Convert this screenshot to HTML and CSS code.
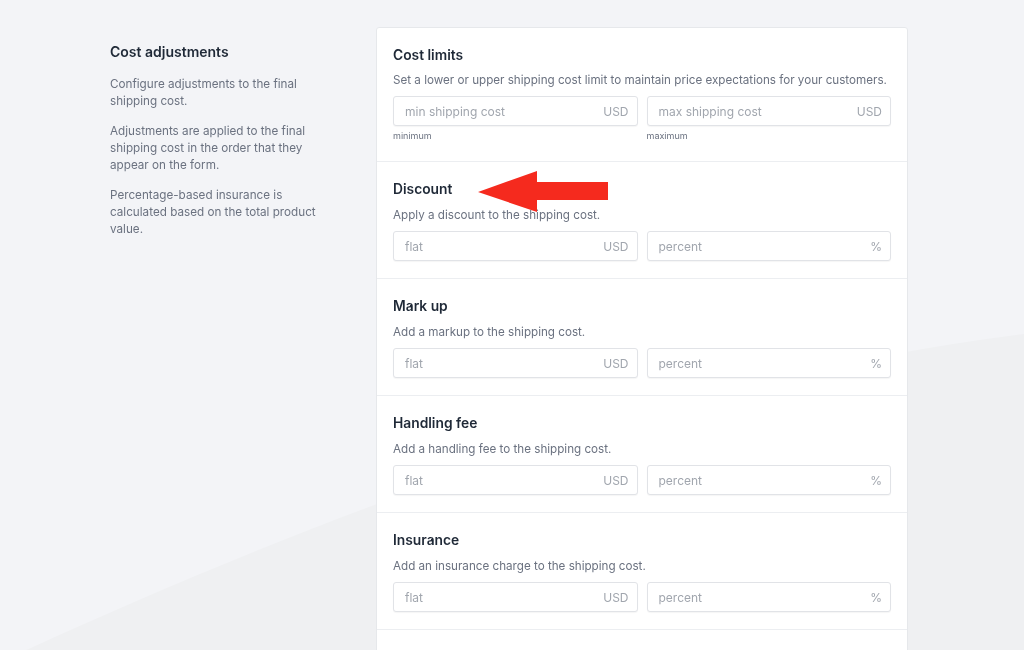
FILE: index.html
```html
<!DOCTYPE html>
<html lang="en">
<head>
<meta charset="utf-8">
<title>Cost adjustments</title>
<link rel="stylesheet" href="styles.css">
</head>
<body>
<svg class="bg-shape" width="1024" height="650" viewBox="0 0 1024 650" aria-hidden="true">
  <path d="M22 652 C 300 525, 680 375, 1024 334 L 1024 650 Z" fill="#eff0f2"/>
</svg>
<main class="page">
  <section class="intro">
    <h2 class="intro-title">Cost adjustments</h2>
    <p>Configure adjustments to the final shipping cost.</p>
    <p>Adjustments are applied to the final shipping cost in the order that they appear on the form.</p>
    <p>Percentage-based insurance is calculated based on the total product value.</p>
  </section>
  <div class="card">
    <div class="group group-limits">
      <h3 class="group-title">Cost limits</h3>
      <p class="group-desc">Set a lower or upper shipping cost limit to maintain price expectations for your customers.</p>
      <div class="fields">
        <div class="field">
          <div class="input"><span class="ph">min shipping cost</span><span class="suffix">USD</span></div>
          <div class="help">minimum</div>
        </div>
        <div class="field">
          <div class="input"><span class="ph">max shipping cost</span><span class="suffix">USD</span></div>
          <div class="help">maximum</div>
        </div>
      </div>
    </div>
    <div class="group">
      <h3 class="group-title">Discount</h3>
      <p class="group-desc">Apply a discount to the shipping cost.</p>
      <div class="fields">
        <div class="input"><span class="ph">flat</span><span class="suffix">USD</span></div>
        <div class="input"><span class="ph">percent</span><span class="suffix">%</span></div>
      </div>
      <svg class="arrow" width="131" height="42" viewBox="0 0 131 42" aria-hidden="true">
        <polygon points="1,22 60,1 60,12 131,12 131,30 60,30 60,42" fill="#f52a1e"/>
      </svg>
    </div>
    <div class="group">
      <h3 class="group-title">Mark up</h3>
      <p class="group-desc">Add a markup to the shipping cost.</p>
      <div class="fields">
        <div class="input"><span class="ph">flat</span><span class="suffix">USD</span></div>
        <div class="input"><span class="ph">percent</span><span class="suffix">%</span></div>
      </div>
    </div>
    <div class="group">
      <h3 class="group-title">Handling fee</h3>
      <p class="group-desc">Add a handling fee to the shipping cost.</p>
      <div class="fields">
        <div class="input"><span class="ph">flat</span><span class="suffix">USD</span></div>
        <div class="input"><span class="ph">percent</span><span class="suffix">%</span></div>
      </div>
    </div>
    <div class="group">
      <h3 class="group-title">Insurance</h3>
      <p class="group-desc">Add an insurance charge to the shipping cost.</p>
      <div class="fields">
        <div class="input"><span class="ph">flat</span><span class="suffix">USD</span></div>
        <div class="input"><span class="ph">percent</span><span class="suffix">%</span></div>
      </div>
    </div>
    <div class="group group-empty"></div>
  </div>
</main>
</body>
</html>
```

FILE: styles.css
```css
html, body {
  margin: 0;
  padding: 0;
}
body {
  background: #f3f4f7;
  font-family: Inter, "Noto Sans", "Liberation Sans", sans-serif;
  color: #1f2937;
  overflow: hidden;
  height: 650px;
}
.bg-shape {
  position: fixed;
  left: 0;
  top: 0;
  z-index: 0;
}
.page {
  position: relative;
  z-index: 1;
  display: grid;
  grid-template-columns: 266px 532px;
  padding: 27px 0 0 110px;
}
.intro {
  padding: 15px 40px 0 0;
}
.intro-title {
  margin: 0 0 14px;
  font-size: 14px;
  line-height: 20px;
  font-weight: 600;
  color: #1f2937;
}
.intro p {
  margin: 0 0 13px;
  font-size: 11.7px;
  line-height: 17px;
  color: #6b7280;
}
.card {
  background: #fff;
  border: 1px solid #e6e8eb;
  border-radius: 3px;
}
.group {
  position: relative;
  padding: 17px 16px;
  border-top: 1px solid #eceef1;
}
.group-limits {
  border-top: 0;
  padding-top: 17px;
  padding-bottom: 19px;
}
.group-empty {
  height: 60px;
}
.group-title {
  margin: 0 0 8px;
  font-size: 13.8px;
  line-height: 20px;
  font-weight: 600;
  color: #1f2937;
}
.group-limits .group-title {
  margin-bottom: 7px;
}
.group-desc {
  margin: 0 0 8px;
  font-size: 11.65px;
  line-height: 16px;
  color: #6b7280;
  white-space: nowrap;
}
.fields {
  display: grid;
  grid-template-columns: 1fr 1fr;
  gap: 9px;
}
.input {
  display: flex;
  align-items: center;
  justify-content: space-between;
  height: 30px;
  box-sizing: border-box;
  padding: 0 8px 0 11px;
  border: 1px solid #e1e3e7;
  border-radius: 3px;
  box-shadow: 0 1px 1px rgba(0, 0, 0, 0.04);
  font-size: 12px;
  color: #a1a6ae;
  background: #fff;
}
.help {
  margin-top: 4px;
  font-size: 9px;
  line-height: 12px;
  color: #6b7280;
}
.arrow {
  position: absolute;
  left: 100px;
  top: 8px;
}
```
